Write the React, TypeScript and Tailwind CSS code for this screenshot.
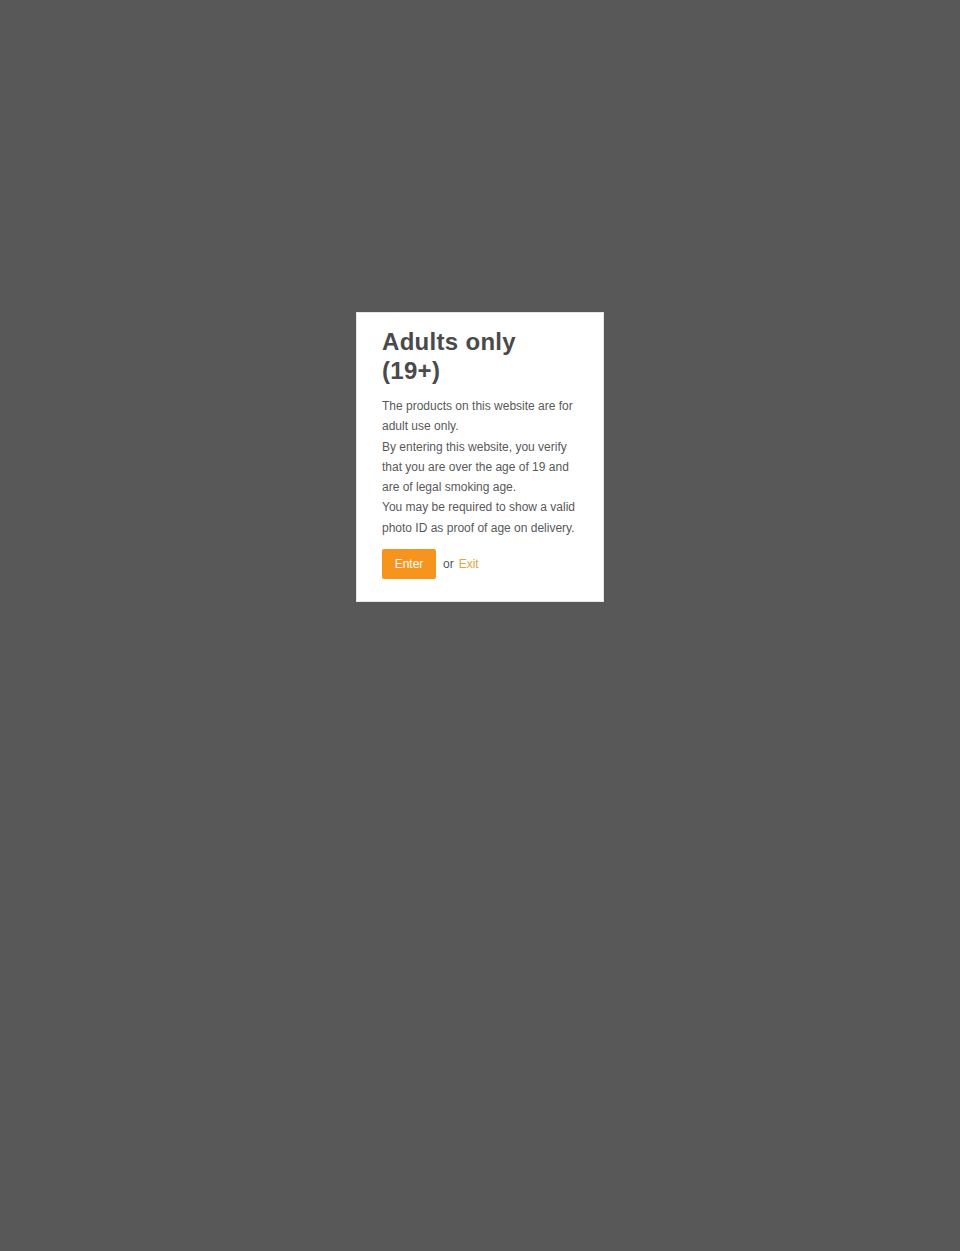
export default function App() {
  return (
    <div
      className="min-h-[1251px] w-full bg-[#585858] flex items-start justify-center pt-[312px]"
      style={{ fontFamily: '"Liberation Sans", Arial, sans-serif' }}
    >
      <div className="w-[248px] bg-white border border-[#e6e6e6] pl-[25px] pr-[22px] pt-[14px] pb-[22px] text-[#555]">
        <h1 className="text-[24px] leading-[29px] font-bold text-[#4a4a4a] tracking-[0.3px] mb-[11px]">
          Adults only (19+)
        </h1>
        <div className="text-[12px] leading-[20.3px] text-[#595959]">
          <p>The products on this website are for adult use only.</p>
          <p>By entering this website, you verify that you are over the age of 19 and are of legal smoking age.</p>
          <p>You may be required to show a valid photo ID as proof of age on delivery.</p>
        </div>
        <div className="flex items-center mt-[11px] text-[12px]">
          <button className="h-[30px] w-[54px] bg-[#f7941d] text-white rounded-[2px]">Enter</button>
          <span className="ml-[7px] text-[#555]">or</span>
          <a href="#" className="ml-[5px] text-[#e9a23b]">Exit</a>
        </div>
      </div>
    </div>
  );
}
